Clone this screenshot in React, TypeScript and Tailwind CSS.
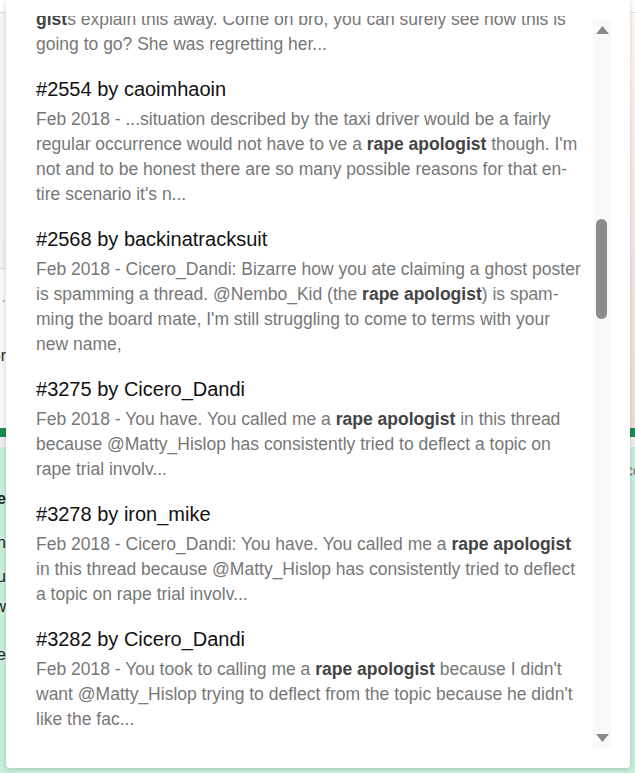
import React from "react";

const results = [
  {
    id: "2554",
    user: "caoimhaoin",
    before:
      "...situation described by the taxi driver would be a fairly regular occurrence would not have to ve a ",
    after:
      " though. I'm not and to be honest there are so many possible reasons for that en\u00ADtire scenario it's n...",
  },
  {
    id: "2568",
    user: "backinatracksuit",
    before:
      "Cicero_Dandi: Bizarre how you ate claiming a ghost poster is spamming a thread. @Nembo_Kid (the ",
    after:
      ") is spam\u00ADming the board mate, I'm still struggling to come to terms with your new name,",
  },
  {
    id: "3275",
    user: "Cicero_Dandi",
    before: "You have. You called me a ",
    after:
      " in this thread because @Matty_Hislop has consistently tried to deflect a topic on rape trial involv...",
  },
  {
    id: "3278",
    user: "iron_mike",
    before: "Cicero_Dandi: You have. You called me a ",
    after:
      " in this thread because @Matty_Hislop has consistently tried to deflect a topic on rape trial involv...",
  },
  {
    id: "3282",
    user: "Cicero_Dandi",
    before: "You took to calling me a ",
    after:
      " because I didn't want @Matty_Hislop trying to deflect from the topic because he didn't like the fac...",
  },
];

function Arrow({ down }: { down?: boolean }) {
  return (
    <div className="h-[20px] flex items-center justify-center">
      <svg width="13" height="8" viewBox="0 0 13 8" className={down ? "rotate-180" : ""}>
        <path d="M6.5 0 L13 8 L0 8 Z" fill="#8a8a8a" />
      </svg>
    </div>
  );
}

function PageBehind() {
  return (
    <div className="flex flex-col h-full">
      <div className="h-[13px] bg-white border-b border-[#dcdcdc]" />
      <div className="h-[415px] flex">
        <div className="w-[300px] flex flex-col">
          <div className="h-[256px] bg-gradient-to-b from-[#f6f6f6] to-[#f1f1f1] border-b border-[#dcdcdc]" />
          <div className="flex-1 bg-[#f8f8f8] w-[6px] overflow-hidden flex flex-col items-end">
            <span className="mt-[22px] text-[14px] leading-[18px] text-[#888] whitespace-nowrap">Topic ·</span>
            <span className="mt-[37px] text-[16px] leading-[20px] text-[#222] whitespace-nowrap">Author</span>
          </div>
        </div>
        <div className="flex-1 bg-gradient-to-b from-[#fbf8f6] via-[#f4e9e3] to-[#efdfd7]" />
      </div>
      <div className="h-[9px] bg-[#1d8a4e]" />
      <div className="h-[10px] bg-[#eeeeee]" />
      <div className="flex-1 bg-[#c9eddb] flex">
        <div className="w-[6px] overflow-hidden flex flex-col items-end text-[16px] text-[#222]">
          <span className="mt-[40px] font-bold whitespace-nowrap">More</span>
          <span className="mt-[20px] whitespace-nowrap">on</span>
          <span className="mt-[10px] whitespace-nowrap">you</span>
          <span className="mt-[6px] whitespace-nowrap">view</span>
          <span className="mt-[24px] whitespace-nowrap">here</span>
        </div>
        <div className="flex-1" />
        <div className="w-[10px] overflow-hidden text-[16px] text-[#777]">
          <span className="block mt-[12px] whitespace-nowrap">cont</span>
        </div>
      </div>
    </div>
  );
}

export default function App() {
  return (
    <div
      className="relative w-full h-[773px] overflow-hidden bg-white"
      style={{ fontFamily: '"Liberation Sans", Arial, sans-serif' }}
    >
      <PageBehind />

      <div className="absolute left-[6px] top-0 w-[624px] h-[768px] bg-white rounded-b-[4px] shadow-[0_1px_5px_rgba(0,0,0,0.18)] flex pt-[16px] pb-[20px] pl-[30px] pr-[19px]">
        <div className="flex-1 overflow-hidden">
          <div className="w-[545px] -mt-[44px]">
            <div className="py-[10px] text-[17.5px] leading-[25px] text-[#777]">
              Feb 2018 - ...you would never see one of the <b className="text-[#444]">rape apolo-</b>
              <br />
              <b className="text-[#444]">gist</b>s explain this away. Come on bro, you can surely see how this is
              <br />
              going to go? She was regretting her...
            </div>
            {results.map((r) => (
              <div key={r.id} className="py-[10px]">
                <div className="text-[20px] leading-[24px] text-[#111] mb-[6px]">
                  #{r.id} by {r.user}
                </div>
                <p className="text-[17.5px] leading-[25px] text-[#777]">
                  Feb 2018 - {r.before}
                  <b className="text-[#444]">rape apologist</b>
                  {r.after}
                </p>
              </div>
            ))}
          </div>
        </div>
        <div className="w-[18px] ml-[11px] mt-[4px] bg-[#f9f9f9] flex flex-col">
          <Arrow />
          <div className="flex-1">
            <div className="w-[11px] h-[100px] mt-[179px] ml-[3px] rounded-[6px] bg-[#8c8c8c]" />
          </div>
          <Arrow down />
        </div>
      </div>
    </div>
  );
}
